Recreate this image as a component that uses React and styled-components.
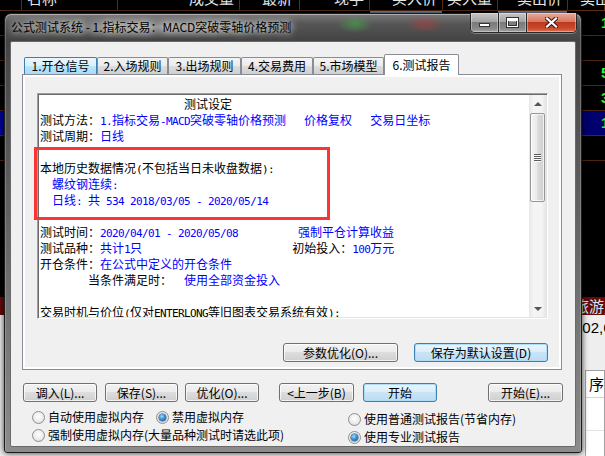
import styled, { createGlobalStyle, css } from "styled-components";

const GlobalStyle = createGlobalStyle`
  html, body { margin: 0; padding: 0; background: #000; }
  body {
    font-family: "Noto Sans CJK SC", "Noto Sans", sans-serif;
    font-size: 12px;
    color: #000;
  }
`;

const Screen = styled.div`
  position: relative;
  width: 605px;
  height: 456px;
  overflow: hidden;
  background: #000;
`;

/* ---- quote board behind the dialog ---- */

const Board = styled.div`
  display: flex;
  flex-direction: column;
  height: 100%;
`;

const HeadRow = styled.div`
  flex: none;
  display: flex;
  height: 10px;
  border-bottom: 1px solid #5b2d16;
`;

const HeadCell = styled.div`
  position: relative;
  flex: none;
  box-sizing: border-box;
  width: ${(p) => p.$w}px;
  height: 10px;
  border-right: 1px solid #5b2d16;
  padding: 0 ${(p) => p.$pr ?? 5}px 0 ${(p) => p.$pl ?? 0}px;
  text-align: ${(p) => (p.$left ? "left" : "right")};
  color: #e4e4e4;
  font-size: 15px;
  white-space: nowrap;
  span {
    display: block;
    line-height: 15px;
    margin-top: -10px;
  }
  ${(p) =>
    p.$sel &&
    css`
      &::after {
        content: "";
        position: absolute;
        left: 0;
        right: 0;
        bottom: -3px;
        height: 2px;
        background: #7f8ea8;
      }
    `}
`;

const QuoteRow = styled.div`
  flex: none;
  height: 24px;
  border-bottom: 1px solid #4e2612;
  background: ${(p) => (p.$hl ? "linear-gradient(90deg, #0000a0, #00006e)" : "transparent")};
  color: #2cf52c;
  font: bold 15px/24px "Liberation Sans", sans-serif;
  padding-left: 601px;
  white-space: nowrap;
`;

const BlackGap = styled.div`
  flex: none;
  height: 136px;
`;

const RedRow = styled.div`
  flex: none;
  height: 18px;
  background: #6a0808;
  color: #c8eef5;
  font-size: 15px;
  line-height: 18px;
  padding-left: 574px;
  white-space: nowrap;
`;

const LowerPane = styled.div`
  flex: 1;
  background: #eeeeee;
  display: flex;
  flex-direction: column;
`;

const StatusLine = styled.div`
  height: 25px;
  font: 15px/25px "Liberation Sans", sans-serif;
  padding-left: 574px;
  white-space: nowrap;
`;

const ListBox = styled.div`
  flex: 1;
  margin: 30px 0 0 585px;
  border: 1px solid #a0a0a0;
  background: #fff;
`;

const ListHead = styled.div`
  height: 26px;
  border-bottom: 1px solid #d5d5d5;
  font-size: 15px;
  line-height: 26px;
  padding-left: 3px;
  white-space: nowrap;
  overflow: hidden;
`;

const ListRow = styled.div`
  height: 32px;
  border-bottom: 1px solid #e4e4e4;
`;

/* ---- dialog window ---- */

const Window = styled.div`
  position: absolute;
  left: 4px;
  top: 13px;
  width: 578px;
  height: 440px;
  box-sizing: border-box;
  display: flex;
  flex-direction: column;
  padding: 0 5px 5px;
  border: 1px solid #1c1c1c;
  border-radius: 7px 7px 3px 3px;
  background:
    radial-gradient(150px 12px at 150px 13px, rgba(200, 200, 200, 0.55), rgba(200, 200, 200, 0)),
    radial-gradient(18px 9px at 350px 10px, rgba(70, 170, 70, 0.6), rgba(70, 170, 70, 0)),
    radial-gradient(20px 9px at 420px 10px, rgba(180, 60, 60, 0.55), rgba(180, 60, 60, 0)),
    linear-gradient(180deg, #7a7a7a 0px, #555 10px, #444 26px, #585858 140px, #8c8c8c 100%);
  box-shadow:
    inset 0 1px 0 rgba(255, 255, 255, 0.4),
    inset 1px 0 0 rgba(255, 255, 255, 0.2),
    inset -1px 0 0 rgba(255, 255, 255, 0.2),
    0 0 6px rgba(0, 0, 0, 0.8);
`;

const TitleBar = styled.div`
  flex: none;
  display: flex;
  align-items: flex-start;
  height: 27px;
`;

const Caption = styled.div`
  padding: 6px 0 0 1px;
  line-height: 14px;
  font-size: 12px;
  color: #000;
  white-space: nowrap;
  text-shadow: 0 0 6px rgba(255, 255, 255, 0.9), 0 0 10px rgba(255, 255, 255, 0.6);
`;

const CaptionButtons = styled.div`
  display: flex;
  margin: -1px -1px 0 auto;
  border: 1px solid #2a2a2a;
  border-top: none;
  border-radius: 0 0 5px 5px;
  overflow: hidden;
  box-shadow: 0 1px 0 rgba(255, 255, 255, 0.3);
`;

const CapBtn = styled.div`
  width: ${(p) => p.$w}px;
  height: 19px;
  display: flex;
  align-items: center;
  justify-content: center;
  border-left: ${(p) => (p.$first ? "none" : "1px solid #2a2a2a")};
  background: ${(p) =>
    p.$close
      ? "linear-gradient(180deg, #e9a99a 0%, #d47a64 45%, #c0391c 50%, #c64a2e 80%, #dd7452 100%)"
      : "linear-gradient(180deg, #c6c6c6 0%, #a4a4a4 45%, #7a7a7a 50%, #878787 80%, #a4a4a4 100%)"};
  box-shadow: inset 0 0 0 1px rgba(255, 255, 255, 0.35);
`;

const Client = styled.div`
  flex: 1;
  box-sizing: border-box;
  display: flex;
  flex-direction: column;
  align-items: flex-start;
  padding: 12px 0 0 11px;
  background: #f0f0f0;
  border: 1px solid #6a6a6a;
  border-radius: 2px;
`;

const TabBar = styled.div`
  position: relative;
  z-index: 1;
  display: flex;
  align-items: flex-end;
  height: 21px;
  margin: 0 0 -1px 2px;
`;

const Tab = styled.div`
  flex: none;
  box-sizing: border-box;
  width: ${(p) => p.$w}px;
  height: ${(p) => (p.$active ? 21 : 17)}px;
  margin-bottom: ${(p) => (p.$active ? 0 : 1)}px;
  border: 1px solid ${(p) => (p.$hot ? "#3c7fb1" : "#898c95")};
  border-bottom: none;
  border-radius: 2px 2px 0 0;
  text-align: center;
  line-height: ${(p) => (p.$active ? 19 : 15)}px;
  white-space: nowrap;
  background: ${(p) =>
    p.$active
      ? "#fff"
      : p.$hot
      ? "linear-gradient(180deg, #eaf6fd 0%, #d9f0fc 50%, #bee6fd 50%, #a7d9f5 100%)"
      : "linear-gradient(180deg, #f3f3f3 0%, #ebebeb 50%, #dddddd 50%, #cfcfcf 100%)"};
`;

const Panel = styled.div`
  box-sizing: border-box;
  width: 540px;
  height: 296px;
  display: flex;
  padding: 2px;
  border: 1px solid #898c95;
  background: #fff;
`;

const Page = styled.div`
  flex: 1;
  display: flex;
  flex-direction: column;
  padding: 16px 11px 0 12px;
  background: #f0f0f0;
`;

const TextBox = styled.div`
  position: relative;
  box-sizing: border-box;
  width: 511px;
  height: 226px;
  display: flex;
  background: #fff;
  border: 1px solid;
  border-color: #a0a0a0 #ffffff #ffffff #a0a0a0;
  box-shadow: inset 1px 1px 0 #696969, inset -1px -1px 0 #e3e3e3;
  padding: 1px;
`;

const Report = styled.div`
  flex: 1;
  overflow: hidden;
  padding: 1px 0 0 1px;
`;

const ReportLine = styled.div`
  height: 16px;
  line-height: 16px;
  font-size: 12px;
  white-space: pre;
`;

const Half = styled.span`
  font-family: "DejaVu Sans Mono", monospace;
  font-size: 11px;
  letter-spacing: -0.62px;
`;

const Ink = styled.span`
  color: ${(p) => (p.$blue ? "#0000ff" : "#000")};
`;

const Mark = styled.div`
  position: absolute;
  left: -4px;
  top: 53px;
  width: 296px;
  height: 73px;
  box-sizing: border-box;
  border: 3px solid #fb3434;
  pointer-events: none;
`;

const ScrollBar = styled.div`
  flex: none;
  width: 17px;
  display: flex;
  flex-direction: column;
  align-items: center;
  background: linear-gradient(90deg, #e6e6e6 0%, #f4f4f4 25%, #f4f4f4 75%, #e6e6e6 100%);
`;

const ArrowBox = styled.div`
  flex: none;
  width: 17px;
  height: 17px;
  display: flex;
  align-items: center;
  justify-content: center;
  margin-top: ${(p) => (p.$down ? "auto" : 0)};
`;

const Arrow = styled.span`
  width: 0;
  height: 0;
  border-left: 4px solid transparent;
  border-right: 4px solid transparent;
  ${(p) => (p.$down ? "border-top: 4px solid #555;" : "border-bottom: 4px solid #555;")}
`;

const Thumb = styled.div`
  flex: none;
  box-sizing: border-box;
  width: 15px;
  height: 89px;
  margin-top: 1px;
  display: flex;
  align-items: center;
  justify-content: center;
  border: 1px solid #979797;
  border-radius: 2px;
  background: linear-gradient(90deg, #f5f5f5 0%, #eaeaea 45%, #d9d9d9 55%, #d2d2d2 100%);
  box-shadow: inset 0 0 0 1px rgba(255, 255, 255, 0.7);
`;

const Grip = styled.span`
  width: 7px;
  height: 8px;
  background: repeating-linear-gradient(180deg, #5c5c5c 0 1px, #fafafa 1px 2px);
`;

const PanelButtons = styled.div`
  display: flex;
  justify-content: flex-end;
  gap: 16px;
  margin-top: 24px;
`;

const Btn = styled.button`
  flex: none;
  box-sizing: border-box;
  width: ${(p) => p.$w}px;
  height: 19px;
  margin: 0 0 0 ${(p) => p.$ml || 0}px;
  padding: 0;
  font: 12px/17px "Noto Sans CJK SC", sans-serif;
  color: #000;
  white-space: nowrap;
  border: 1px solid ${(p) => (p.$def ? "#3c7fb1" : "#707070")};
  border-radius: 3px;
  background: ${(p) =>
    p.$def
      ? "linear-gradient(180deg, #e9f5fd 0%, #dcedf9 49%, #c9e4f7 50%, #bddcf2 100%)"
      : "linear-gradient(180deg, #f2f2f2 0%, #ebebeb 49%, #dddddd 50%, #cfcfcf 100%)"};
  box-shadow: inset 0 0 0 1px ${(p) => (p.$def ? "rgba(170, 220, 248, 0.9)" : "rgba(255, 255, 255, 0.75)")};
`;

const BottomButtons = styled.div`
  display: flex;
  margin-top: 13px;
`;

const RadioArea = styled.div`
  display: flex;
  margin-top: 6px;
  padding-left: 10px;
`;

const RadioGroup = styled.div`
  display: flex;
  flex-direction: column;
  width: ${(p) => (p.$w ? `${p.$w}px` : "auto")};
  padding-top: ${(p) => p.$drop || 0}px;
`;

const RadioRow = styled.div`
  display: flex;
  align-items: center;
  height: 18px;
`;

const RadioLabel = styled.label`
  display: flex;
  align-items: center;
  gap: 3px;
  margin-left: ${(p) => p.$ml || 0}px;
  white-space: nowrap;
  line-height: 18px;
`;

const RadioDot = styled.span`
  position: relative;
  flex: none;
  box-sizing: border-box;
  width: 13px;
  height: 13px;
  border-radius: 50%;
  border: 1px solid #8e8f8f;
  background: radial-gradient(circle at 50% 40%, #ffffff 0%, #ececec 55%, #d2d2d2 100%);
  ${(p) =>
    p.$on &&
    css`
      &::after {
        content: "";
        position: absolute;
        left: 2px;
        top: 2px;
        width: 7px;
        height: 7px;
        border-radius: 50%;
        background: radial-gradient(circle at 40% 35%, #a8dcfb 0%, #3a8fd3 45%, #0b4a82 100%);
        box-shadow: 0 0 0 0.5px #1b4a70;
      }
    `}
`;

/* ---- data ---- */

const HEAD = [
  { w: 22, t: "" },
  { w: 96, t: "名称", left: true, pl: 5 },
  { w: 122, t: "成交量" },
  { w: 60, t: "最新", pr: 7 },
  { w: 70, t: "现手" },
  { w: 73, t: "买入价", sel: true },
  { w: 55, t: "买入量" },
  { w: 70, t: "卖出价", sel: true },
  { w: 37, t: "卖出量", left: true, pl: 12 },
];

const QUOTES = ["1", "", "5", "3", "1", ""];

const TABS = [
  { w: 73, t: "1.开仓信号", hot: true },
  { w: 71, t: "2.入场规则" },
  { w: 73, t: "3.出场规则" },
  { w: 72, t: "4.交易费用" },
  { w: 71, t: "5.市场模型" },
  { w: 75, t: "6.测试报告", active: true },
];

const REPORT = [
  [["                        测试设定"]],
  [["测试方法："], ["1.指标交易-MACD突破零轴价格预测   价格复权   交易日坐标", true]],
  [["测试周期："], ["日线", true]],
  [],
  [["本地历史数据情况(不包括当日未收盘数据):"]],
  [["  螺纹钢连续:", true]],
  [["  日线: 共 534 2018/03/05 - 2020/05/14", true]],
  [],
  [["测试时间："], ["2020/04/01 - 2020/05/08          强制平仓计算收益", true]],
  [["测试品种："], ["共计1只", true], ["                         初始投入："], ["100万元", true]],
  [["开仓条件："], ["在公式中定义的开仓条件", true]],
  [["        当条件满足时：  "], ["使用全部资金投入", true]],
  [],
  [["交易时机与价位(仅对ENTERLONG等旧图表交易系统有效):"]],
];

const BOTTOM = [
  { w: 74, ml: 1, t: "调入(L)..." },
  { w: 73, ml: 8, t: "保存(S)..." },
  { w: 74, ml: 7, t: "优化(O)..." },
  { w: 75, ml: 20, t: "<上一步(B)" },
  { w: 74, ml: 9, t: "开始", def: true },
  { w: 75, ml: 51, t: "开始(E)..." },
];

function Mixed({ text }) {
  return text
    .split(/([\x20-\x7e]+)/)
    .filter(Boolean)
    .map((part, i) =>
      /^[\x20-\x7e]+$/.test(part) ? <Half key={i}>{part}</Half> : <span key={i}>{part}</span>
    );
}

function MinGlyph() {
  return (
    <svg width="13" height="10" viewBox="0 0 13 10">
      <rect x="1.5" y="5.5" width="10" height="3" fill="#fff" stroke="#333" strokeWidth="1" />
    </svg>
  );
}

function MaxGlyph() {
  return (
    <svg width="13" height="11" viewBox="0 0 13 11">
      <rect x="1.5" y="1.5" width="10" height="8" fill="none" stroke="#333" strokeWidth="3" />
      <rect x="1.5" y="1.5" width="10" height="8" fill="none" stroke="#fff" strokeWidth="1" />
      <rect x="2" y="2" width="9" height="2" fill="#fff" />
    </svg>
  );
}

function CloseGlyph() {
  return (
    <svg width="13" height="11" viewBox="0 0 13 11">
      <path d="M2 1.5 L11 9.5 M11 1.5 L2 9.5" stroke="#3a1a14" strokeWidth="4.2" strokeLinecap="square" />
      <path d="M2 1.5 L11 9.5 M11 1.5 L2 9.5" stroke="#fff" strokeWidth="2.2" strokeLinecap="square" />
    </svg>
  );
}

export default function App() {
  return (
    <Screen>
      <GlobalStyle />
      <Board>
        <HeadRow>
          {HEAD.map((h, i) => (
            <HeadCell key={i} $w={h.w} $left={h.left} $pl={h.pl} $pr={h.pr} $sel={h.sel}>
              <span>{h.t}</span>
            </HeadCell>
          ))}
        </HeadRow>
        {QUOTES.map((q, i) => (
          <QuoteRow key={i} $hl={i === 4}>
            {q}
          </QuoteRow>
        ))}
        <BlackGap />
        <RedRow>旅游九</RedRow>
        <LowerPane>
          <StatusLine>102,6</StatusLine>
          <ListBox>
            <ListHead>序号</ListHead>
            <ListRow />
            <ListRow />
          </ListBox>
        </LowerPane>
      </Board>

      <Window>
        <TitleBar>
          <Caption>公式测试系统 - 1.指标交易：MACD突破零轴价格预测</Caption>
          <CaptionButtons>
            <CapBtn $w={27} $first>
              <MinGlyph />
            </CapBtn>
            <CapBtn $w={27}>
              <MaxGlyph />
            </CapBtn>
            <CapBtn $w={49} $close>
              <CloseGlyph />
            </CapBtn>
          </CaptionButtons>
        </TitleBar>

        <Client>
          <TabBar>
            {TABS.map((t) => (
              <Tab key={t.t} $w={t.w} $hot={t.hot} $active={t.active}>
                {t.t}
              </Tab>
            ))}
          </TabBar>

          <Panel>
            <Page>
              <TextBox>
                <Report>
                  {REPORT.map((line, i) => (
                    <ReportLine key={i}>
                      {line.map(([text, blue], j) => (
                        <Ink key={j} $blue={blue}>
                          <Mixed text={text} />
                        </Ink>
                      ))}
                    </ReportLine>
                  ))}
                </Report>
                <ScrollBar>
                  <ArrowBox>
                    <Arrow />
                  </ArrowBox>
                  <Thumb>
                    <Grip />
                  </Thumb>
                  <ArrowBox $down>
                    <Arrow $down />
                  </ArrowBox>
                </ScrollBar>
                <Mark />
              </TextBox>

              <PanelButtons>
                <Btn $w={115}>参数优化(O)...</Btn>
                <Btn $w={134} $def>
                  保存为默认设置(D)
                </Btn>
              </PanelButtons>
            </Page>
          </Panel>

          <BottomButtons>
            {BOTTOM.map((b) => (
              <Btn key={b.t} $w={b.w} $ml={b.ml} $def={b.def}>
                {b.t}
              </Btn>
            ))}
          </BottomButtons>

          <RadioArea>
            <RadioGroup $w={316}>
              <RadioRow>
                <RadioLabel>
                  <RadioDot />
                  自动使用虚拟内存
                </RadioLabel>
                <RadioLabel $ml={12}>
                  <RadioDot $on />
                  禁用虚拟内存
                </RadioLabel>
              </RadioRow>
              <RadioRow>
                <RadioLabel>
                  <RadioDot />
                  强制使用虚拟内存(大量品种测试时请选此项)
                </RadioLabel>
              </RadioRow>
            </RadioGroup>
            <RadioGroup $drop={2}>
              <RadioRow>
                <RadioLabel>
                  <RadioDot />
                  使用普通测试报告(节省内存)
                </RadioLabel>
              </RadioRow>
              <RadioRow>
                <RadioLabel>
                  <RadioDot $on />
                  使用专业测试报告
                </RadioLabel>
              </RadioRow>
            </RadioGroup>
          </RadioArea>
        </Client>
      </Window>
    </Screen>
  );
}
